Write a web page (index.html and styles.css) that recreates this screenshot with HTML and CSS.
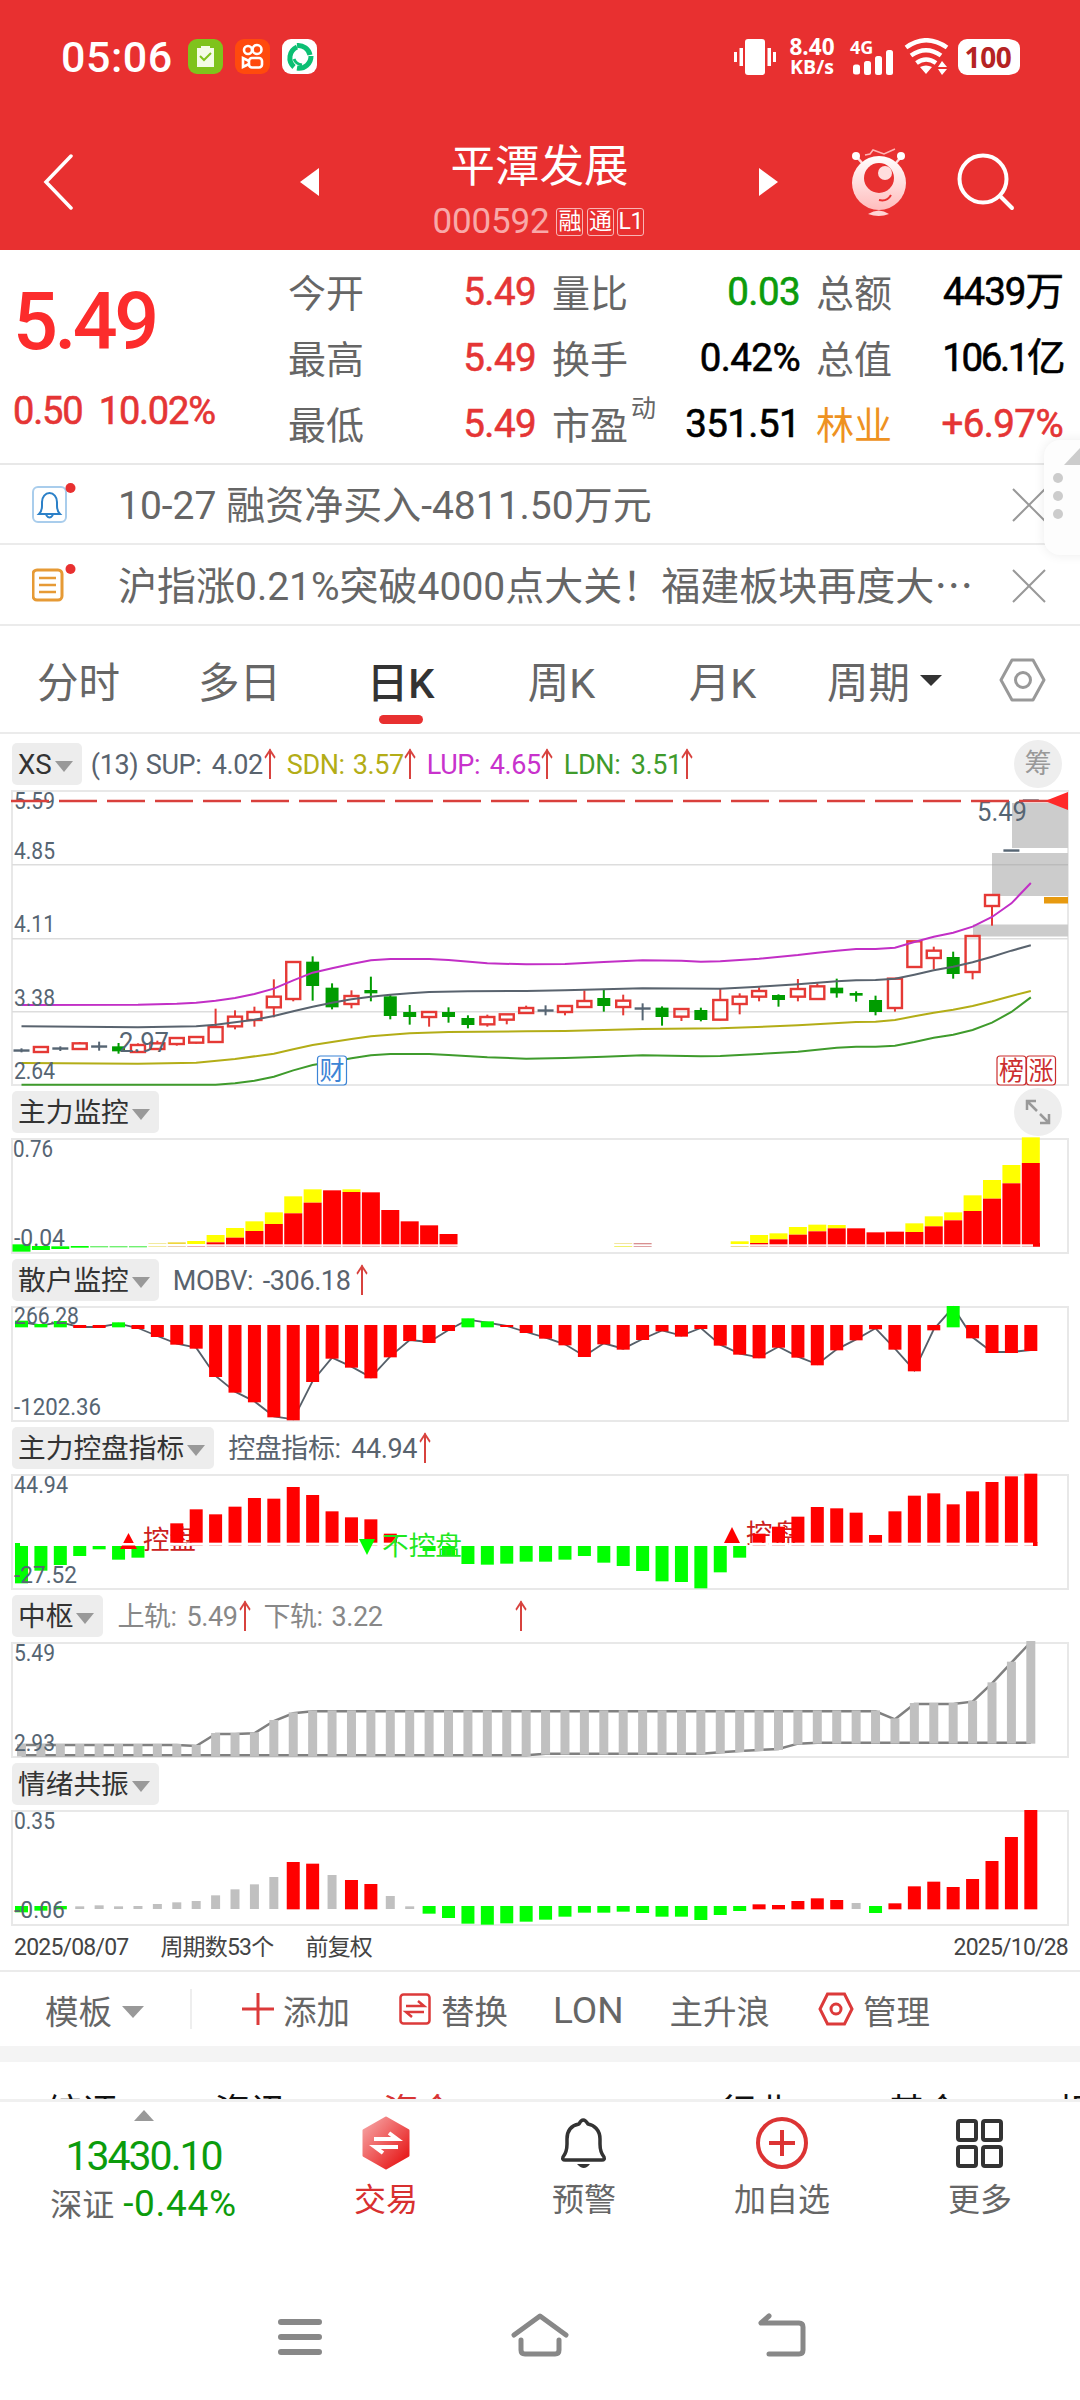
FILE: index.html
```html
<!DOCTYPE html>
<html lang="zh-CN">

<head>
    <meta charset="UTF-8">
    <meta name="viewport" content="width=device-width, initial-scale=1.0">
    <title>平潭发展 000592</title>
    <link rel="stylesheet" href="styles.css">
</head>

<body>
    <header>
        <div class="status">
            <span class="time">05:06</span>
            <svg class="app" width="35" height="35" viewBox="0 0 35 35">
                <rect width="35" height="35" rx="9" fill="#7fc31c" />
                <path d="M9 9h4V7h9v2h4v19H9z" fill="#f4fbe6" />
                <path d="M12 17l4 4 7-7" fill="none" stroke="#7fc31c" stroke-width="2" />
            </svg>
            <svg class="app" width="35" height="35" viewBox="0 0 35 35">
                <rect width="35" height="35" rx="9" fill="#ff4a0d" />
                <g fill="none" stroke="#fff" stroke-width="2.6">
                    <circle cx="13" cy="11" r="4" />
                    <circle cx="22" cy="10.500" r="4.500" />
                    <rect x="14" y="19" width="13" height="9.500" rx="3" />
                    <path d="M14 22l-6-3v9l6-3" />
                </g>
            </svg>
            <svg class="app" width="35" height="35" viewBox="0 0 35 35">
                <rect width="35" height="35" rx="9" fill="#fff" />
                <g fill="none" stroke="#0cbf73" stroke-width="5">
                    <path d="M12 28A12 12 0 0 1 15 8" />
                    <path d="M15 6.500A12 12 0 0 1 28 16" />
                    <path d="M29 17A12 12 0 0 1 15 29" />
                    <path d="M12 20q2 5 8 6" stroke-width="3" />
                </g>
            </svg>
            <svg class="vibrate" width="43" height="36" viewBox="0 0 43 36" fill="#fff">
                <rect x="11" width="20" height="36" rx="3" />
                <rect x="5.500" y="9" width="3.500" height="18" />
                <rect y="13" width="3" height="10" />
                <rect x="33.500" y="9" width="3.500" height="18" />
                <rect x="39" y="13" width="3" height="10" />
            </svg>
            <div class="speed"><b>8.40</b><b class="unit">KB/s</b></div>
            <div class="signal">
                <b>4G</b>
                <svg width="40" height="25" viewBox="0 0 40 25" fill="#fff">
                    <rect y="14.500" width="7" height="10" rx="2.500" />
                    <rect x="11" y="11" width="7" height="14" rx="2.500" />
                    <rect x="22" y="6" width="7" height="19" rx="2.500" />
                    <rect x="33" width="7" height="25" rx="2.500" />
                </svg>
            </div>
            <svg class="wifi" width="45" height="37" viewBox="0 0 45 37">
                <g fill="none" stroke="#fff" stroke-width="4.500">
                    <path d="M2 9.500Q22 -5 43 9.500" />
                    <path d="M7 17.500Q22 7 37 17.500" />
                    <path d="M12.500 25Q22 18 32 25" />
                </g>
                <path d="M16 29q6-3 12 0l-6 7zM34 29l4-6 5 6zM34 31l4 6 5-6z" fill="#fff" />
            </svg>
            <div class="battery">100</div>
        </div>
        <nav>
            <svg class="back" width="30" height="56" viewBox="0 0 30 56">
                <path d="M28 2L3 28l25 26" fill="none" stroke="#fff" stroke-width="3.500" stroke-linecap="round" />
            </svg>
            <svg class="prev" width="19" height="28" viewBox="0 0 19 28"><path d="M19 0v28L0 14z" fill="#fff" /></svg>
            <div class="stock">
                <h1>平潭发展</h1>
                <div class="code">000592<i>融</i><i>通</i><i>L1</i></div>
            </div>
            <svg width="19" height="28" viewBox="0 0 19 28"><path d="M0 0v28l19-14z" fill="#fff" /></svg>
            <svg class="mascot" width="54" height="68" viewBox="0 0 54 68">
                <defs>
                    <linearGradient id="face" x1="0" y1="0" x2="0" y2="1">
                        <stop offset="0" stop-color="#fff" />
                        <stop offset="1" stop-color="#ffbcbc" />
                    </linearGradient>
                </defs>
                <path d="M4 8l7 8M50 8l-7 8" stroke="#ffdcdc" stroke-width="2.500" />
                <circle cx="4" cy="8" r="4" fill="#fff" />
                <circle cx="49" cy="8" r="4" fill="#fff" />
                <path d="M13 7l5-1 3-4 11 4 11-5" fill="none" stroke="#ffb5b5" stroke-width="1.500" />
                <circle cx="27" cy="35" r="27" fill="url(#face)" />
                <circle cx="27" cy="30" r="15" fill="#e83030" />
                <circle cx="33" cy="25" r="7" fill="#ffdede" />
                <path d="M27 52q8 2 12-5" fill="none" stroke="#e83030" stroke-width="2" />
                <path d="M16 66q11-7 21 0-10 4-21 0z" fill="#ffd5d5" />
            </svg>
            <svg class="search" width="58" height="58" viewBox="0 0 58 58" fill="none" stroke="#fff" stroke-width="4">
                <circle cx="26" cy="26" r="23.500" />
                <path d="M43 43l12 12" stroke-linecap="round" />
            </svg>
        </nav>
    </header>

    <section class="quote">
        <div class="price">
            <strong>5.49</strong>
            <span>0.50&nbsp; 10.02%</span>
        </div>
        <div class="grid">
            <p>今开<b class="up">5.49</b></p>
            <p>量比<b class="down">0.03</b></p>
            <p>总额<b class="amount">4439万</b></p>
            <p>最高<b class="up">5.49</b></p>
            <p>换手<b>0.42%</b></p>
            <p>总值<b class="cap">106.1亿</b></p>
            <p>最低<b class="up">5.49</b></p>
            <p>市盈<sup>动</sup><b class="pe">351.51</b></p>
            <p class="sector">林业<b class="up">+6.97%</b></p>
        </div>
    </section>

    <div class="notice">
        <svg width="44" height="44" viewBox="0 0 44 44" fill="none">
            <rect x="1" y="7" width="33" height="35" rx="5" stroke="#a9cdec" stroke-width="2" />
            <path d="M7 34q3-3 3-8v-4a7.500 9 0 0 1 15 0v4q0 5 3 8zM14 35q3.500 5 7 0" stroke="#2b80c8" stroke-width="2" />
            <circle cx="38.500" cy="8" r="5" fill="#e83030" />
        </svg>
        <span>10-27 融资净买入-4811.50万元</span>
        <svg class="close" width="34" height="34" viewBox="0 0 34 34"><path d="M1 1l32 32M33 1L1 33" stroke="#999" stroke-width="2" /></svg>
    </div>
    <div class="notice news">
        <svg width="44" height="44" viewBox="0 0 44 44" fill="none">
            <rect x="1" y="9" width="29" height="30" rx="4" stroke="#e69a35" stroke-width="3" />
            <path d="M7 17h17M7 24h17M7 31h17" stroke="#e69a35" stroke-width="2.500" />
            <circle cx="38.500" cy="8" r="5" fill="#e83030" />
        </svg>
        <span>沪指涨0.21%突破4000点大关！福建板块再度大<i>…</i></span>
        <svg class="close" width="34" height="34" viewBox="0 0 34 34"><path d="M1 1l32 32M33 1L1 33" stroke="#999" stroke-width="2" /></svg>
    </div>
    <div class="drawer"><i></i><i></i><i></i></div>

    <ul class="tabs">
        <li>分时</li>
        <li>多日</li>
        <li class="active">日K</li>
        <li>周K</li>
        <li>月K</li>
        <li class="period">周期<i></i></li>
        <li class="setting">
            <svg width="48" height="44" viewBox="0 0 48 44" fill="none" stroke="#999" stroke-width="3">
                <path d="M13 2h21l11 20-11 20H13L2 22z" stroke-linejoin="round" />
                <circle cx="24" cy="22" r="7.500" />
            </svg>
        </li>
    </ul>

    <div class="head head-main">
        <button>XS<i></i></button>
        <span class="val" style="width: 55px">(13)</span>
        <span class="val" style="width: 66px">SUP:</span><span class="val" style="width: 53px">4.02</span><i class="rise"></i>
        <span class="val sdn" style="width: 66px">SDN:</span><span class="val sdn" style="width: 52px">3.57</span><i class="rise"></i>
        <span class="val lup" style="width: 63px">LUP:</span><span class="val lup" style="width: 52px">4.65</span><i class="rise"></i>
        <span class="val ldn" style="width: 67px">LDN:</span><span class="val ldn" style="width: 51px">3.51</span><i class="rise"></i>
        <div class="round">筹</div>
    </div>
    <svg id="kline" width="1080" height="300" viewBox="0 790 1080 300"></svg>

    <div class="head head-first">
        <button>主力监控<i></i></button>
        <div class="round">
            <svg width="26" height="26" viewBox="0 0 26 26" fill="none" stroke="#999" stroke-width="2.500">
                <path d="M2 11V2h9M2 2l10 10M24 15v9h-9M24 24L15 15" />
            </svg>
        </div>
    </div>
    <svg id="main-force" width="1080" height="120" viewBox="0 1136 1080 120"></svg>

    <div class="head">
        <button>散户监控<i></i></button>
        <span class="val first" style="width: 90px">MOBV:</span><span class="val" style="width: 94px">-306.18</span><i class="rise"></i>
    </div>
    <svg id="retail" width="1080" height="120" viewBox="0 1304 1080 120"></svg>

    <div class="head">
        <button>主力控盘指标<i></i></button>
        <span class="val first" style="width: 123px">控盘指标:</span><span class="val" style="width: 68px">44.94</span><i class="rise"></i>
    </div>
    <svg id="control" width="1080" height="120" viewBox="0 1472 1080 120"></svg>

    <div class="head">
        <button>中枢<i></i></button>
        <span class="val grey first" style="width: 69px">上轨:</span><span class="val grey" style="width: 53px">5.49</span><i class="rise wide"></i>
        <span class="val grey" style="width: 68px">下轨:</span><span class="val grey" style="width: 184px">3.22</span><i class="rise"></i>
    </div>
    <svg id="pivot" width="1080" height="120" viewBox="0 1640 1080 120"></svg>

    <div class="head">
        <button>情绪共振<i></i></button>
    </div>
    <svg id="mood" width="1080" height="120" viewBox="0 1808 1080 120"></svg>

    <div class="dates">
        <span>2025/08/07</span>
        <span class="count">周期数53个</span>
        <span>前复权</span>
        <span class="end">2025/10/28</span>
    </div>

    <div class="tools">
        <span class="template">模板<i></i></span>
        <span class="add">
            <svg width="32" height="32" viewBox="0 0 32 32"><path d="M16 0v32M0 16h32" stroke="#dc3a3a" stroke-width="3" /></svg>添加
        </span>
        <span class="swap">
            <svg width="32" height="32" viewBox="0 0 32 32" fill="none" stroke="#dc3a3a" stroke-width="2.500">
                <rect x="1.500" y="1.500" width="29" height="29" rx="3" />
                <path d="M7 13h18l-6-5M25 19H7l6 5" />
            </svg>替换
        </span>
        <span class="lon">LON</span>
        <span class="wave">主升浪</span>
        <span class="manage">
            <svg width="36" height="34" viewBox="0 0 36 34" fill="none" stroke="#dc3a3a" stroke-width="3">
                <path d="M9.500 2h17L34 17l-7.500 15h-17L2 17z" />
                <circle cx="18" cy="17" r="5" />
            </svg>管理
        </span>
    </div>

    <div class="subtabs">
        <span>综评</span><span>资讯</span><span class="on">资金</span><span class="f10">F10</span><span>行业</span><span>基金</span><span>相关</span>
    </div>

    <footer>
        <div class="index">
            <svg width="20" height="11" viewBox="0 0 20 11"><path d="M10 0l10 11H0z" fill="#999" /></svg>
            <span class="point">13430.10</span>
            <span class="market">深证 <b>-0.44%</b></span>
        </div>
        <div class="item trade">
            <svg width="54" height="54" viewBox="0 0 54 54">
                <defs>
                    <linearGradient id="hex" x1="0" y1="0" x2="1" y2="1">
                        <stop offset=".1" stop-color="#f59a9a" />
                        <stop offset=".85" stop-color="#e82222" />
                    </linearGradient>
                </defs>
                <path d="M27 2l22 12.500v25L27 52 5 39.500v-25z" fill="url(#hex)" stroke="url(#hex)" stroke-width="3" stroke-linejoin="round" />
                <path d="M15 23h23l-8-6M39 31H16l8 6" fill="none" stroke="#fff" stroke-width="4" />
            </svg>
            交易
        </div>
        <div class="item">
            <svg width="54" height="54" viewBox="0 0 54 54">
                <path d="M6 41q4-5 4-13v-5C10 12 17 9 22 8q4-8 9 0c6 1 12 6 12 15v5q0 8 4 13 1 3-2 3H8q-3 0-2-3z" fill="none" stroke="#333" stroke-width="3.500" stroke-linejoin="round" />
                <path d="M20 48h13q-6 8-13 0z" fill="#333" />
            </svg>
            预警
        </div>
        <div class="item">
            <svg width="54" height="54" viewBox="0 0 54 54" fill="none" stroke="#dc3434" stroke-width="4">
                <circle cx="27" cy="27" r="24" />
                <path d="M27 14v26M14 27h26" />
            </svg>
            加自选
        </div>
        <div class="item">
            <svg width="54" height="54" viewBox="0 0 54 54" fill="none" stroke="#333" stroke-width="4">
                <rect x="5" y="5" width="18" height="19" rx="2" />
                <rect x="30" y="5" width="18" height="19" rx="2" />
                <rect x="5" y="31" width="18" height="19" rx="2" />
                <rect x="30" y="31" width="18" height="19" rx="2" />
            </svg>
            更多
        </div>
    </footer>

    <div class="sysnav">
        <svg width="46" height="44" viewBox="0 0 46 44" stroke="#888" stroke-width="6" stroke-linecap="round">
            <path d="M4 9h38M4 24h38M4 39h38" />
        </svg>
        <svg width="60" height="44" viewBox="0 0 60 44" fill="none" stroke="#888" stroke-width="5" stroke-linecap="round" stroke-linejoin="round">
            <path d="M4 22L30 3l26 19M11 27v10q0 4 4 4h30q4 0 4-4V27" />
        </svg>
        <svg width="50" height="44" viewBox="0 0 50 44" fill="none" stroke="#888" stroke-width="5" stroke-linecap="round" stroke-linejoin="round">
            <path d="M12 3L4 10h38q4 0 4 4v23q0 4-4 4H12" />
        </svg>
    </div>

    <script src="script.js"></script>
</body>

</html>
```
FILE: styles.css
```css
* {
    margin: 0;
    padding: 0;
    box-sizing: border-box;
}

body {
    width: 1080px;
    height: 2400px;
    overflow: hidden;
    position: relative;
    background: #fff;
    color: #666;
    font-family: Roboto, "Noto Sans CJK SC", sans-serif;
}

svg {
    display: block;
    flex-shrink: 0;
}

i {
    font-style: normal;
}

header {
    height: 250px;
    background: #e83030;
    color: #fff;
}

.status {
    height: 113px;
    display: flex;
    align-items: center;
    padding-left: 61px;
}

.time {
    width: 127px;
    font-size: 43px;
    font-weight: 500;
    letter-spacing: 0.5px;
}

.app {
    margin-right: 12px;
}

.vibrate {
    margin-left: 405px;
}

.speed {
    width: 50px;
    margin-left: 10px;
    font-family: "Open Sans", sans-serif;
    font-size: 22.5px;
    line-height: 20px;
    text-align: center;
}

.speed b {
    display: block;
}

.speed .unit {
    font-size: 19.5px;
}

.signal {
    width: 44px;
    margin: 0 8px 0 15px;
    font-family: "Open Sans", sans-serif;
    font-size: 18px;
    line-height: 16px;
}

.signal b {
    display: block;
    height: 11px;
    margin-left: -2px;
}

.signal svg {
    margin-left: 1px;
}

.battery {
    width: 60px;
    height: 36px;
    margin-left: 9px;
    border-radius: 9px;
    background: #fff;
    box-shadow: 3px 0 0 -1px #fff;
    color: #b52323;
    font: 700 28px/36px "Open Sans", sans-serif;
    letter-spacing: -0.3px;
    text-align: center;
}

nav {
    height: 137px;
    padding-left: 43px;
    display: flex;
    align-items: center;
}

.prev {
    margin-left: 227px;
}

.stock {
    width: 440px;
    margin-top: 25px;
    padding-left: 1px;
    text-align: center;
}

h1 {
    font-size: 44.5px;
    line-height: 55px;
    font-weight: 400;
}

.code {
    display: flex;
    justify-content: center;
    align-items: center;
    height: 54px;
    padding-right: 2px;
    font-size: 35px;
    letter-spacing: -0.2px;
    color: #f8a9a9;
}

.code i {
    width: 27px;
    height: 28px;
    margin-left: 3.5px;
    border: 1.5px solid #f8b5b5;
    border-radius: 3px;
    font-size: 23px;
    line-height: 25px;
    color: #fff;
    text-align: center;
}

.code i:first-child {
    margin-left: 7px;
}

.mascot {
    margin-left: 74px;
}

.search {
    margin-left: 51px;
}

.quote {
    height: 215px;
    padding-top: 10px;
    display: flex;
    border-bottom: 2px solid #e8e8e8;
}

.price {
    width: 289px;
    padding-left: 13px;
    color: #e53535;
}

.price strong {
    display: block;
    height: 111px;
    font-size: 79px;
    line-height: 125px;
    font-weight: 500;
    letter-spacing: -3.5px;
    color: #fc2c2c;
}

.price span {
    font-size: 38px;
    line-height: 80px;
    letter-spacing: -1.2px;
    -webkit-text-stroke: 0.6px;
}

.grid {
    width: 774px;
    margin-left: -1px;
    display: grid;
    grid-template-columns: 248px 248px 247px;
    column-gap: 16px;
    grid-auto-rows: 66px;
}

.grid p {
    display: flex;
    font-size: 38px;
    line-height: 68px;
    white-space: nowrap;
}

.grid b {
    margin-left: auto;
    font-size: 38.5px;
    line-height: 63px;
    font-weight: 400;
    letter-spacing: -0.6px;
    color: #000;
    -webkit-text-stroke: 0.6px;
}

.grid .amount {
    letter-spacing: -1px;
}

.grid .cap {
    letter-spacing: -2.4px;
}

.grid .up {
    color: #e53535;
}

.grid .down {
    color: #0c9c0c;
}

.grid sup {
    font-size: 25px;
    line-height: 33px;
    margin-left: 3px;
}

.grid .sector {
    color: #ee9222;
}

.notice {
    height: 80px;
    padding: 0 34px 0 32px;
    display: flex;
    align-items: center;
    border-bottom: 2px solid #ebebeb;
    font-size: 39px;
    white-space: nowrap;
}

.notice span {
    margin-left: 42px;
    line-height: 85px;
    height: 80px;
}

.notice i {
    font-family: "Noto Sans CJK SC", sans-serif;
    line-height: 1;
}

.notice svg {
    margin-bottom: 4px;
}

.notice .close {
    margin: 2px 0 0 auto;
}

.news {
    height: 81px;
}

.drawer {
    position: absolute;
    top: 440px;
    left: 1044px;
    width: 56px;
    height: 115px;
    padding: 33px 0 0 9px;
    border-radius: 16px;
    background: #fdfdfd;
    box-shadow: 0 0 12px rgba(0, 0, 0, 0.08);
}

.drawer i {
    display: block;
    width: 10px;
    height: 10px;
    margin-bottom: 8px;
    border-radius: 50%;
    background: #ccc;
}

.drawer::before {
    content: "";
    position: absolute;
    left: 20px;
    top: 8px;
    border-left: 16px solid transparent;
    border-bottom: 17px solid #ccc;
}

.tabs {
    height: 108px;
    margin-left: -2px;
    display: flex;
    list-style: none;
    border-bottom: 2px solid #ebebeb;
    font-size: 41.5px;
    line-height: 115px;
}

.tabs li {
    width: 161px;
    text-align: center;
}

.tabs .active {
    color: #333;
    font-weight: 500;
}

.active::after {
    content: "";
    display: block;
    width: 44px;
    height: 9px;
    margin: -26px auto 0;
    border-radius: 5px;
    background: #e83030;
}

.tabs .period {
    width: 196px;
    padding-left: 24px;
    text-align: left;
}

.period i {
    display: inline-block;
    margin-left: 10px;
    vertical-align: 12px;
    border: 11px solid transparent;
    border-top-color: #333;
    border-bottom: 0;
}

.tabs .setting {
    width: 48px;
    padding-top: 32px;
}

.head {
    height: 48px;
    margin-left: 12px;
    padding-top: 3px;
    display: flex;
    font-size: 27px;
    line-height: 44px;
    color: #59636e;
}

.head-main {
    height: 56px;
    padding-top: 9px;
}

.head-first {
    height: 46px;
    padding-top: 1px;
}

.head button {
    height: 42px;
    padding: 1px 9px 0 6px;
    display: flex;
    align-items: center;
    border: 0;
    border-radius: 5px;
    background: #ededed;
    font-family: inherit;
    font-size: 27.7px;
    line-height: 42px;
    color: #333;
}

.head button i {
    margin: 4px 0 0 3px;
    border: 9.5px solid transparent;
    border-top: 11px solid #999;
    border-bottom: 0;
}

.val {
    letter-spacing: -0.4px;
    white-space: nowrap;
}

.head-main .val:nth-child(2) {
    margin-left: 9px;
}

.val.first {
    margin-left: 14px;
}

.sdn {
    color: #b3ad17;
}

.lup {
    color: #c832cc;
}

.ldn {
    color: #3f9b2c;
}

.grey {
    color: #888;
}

.rise {
    width: 11px;
    height: 28px;
    margin: 8px 11px 0 0;
    background: linear-gradient(#d8423e, #d8423e) center / 2px 100% no-repeat;
}

.rise.wide {
    margin-right: 13px;
}

.rise::before {
    content: "";
    display: block;
    width: 8px;
    height: 8px;
    margin: 1px auto 0;
    border-top: 2px solid #d8423e;
    border-left: 2px solid #d8423e;
    transform: rotate(45deg) skew(12deg, 12deg);
}

.round {
    width: 48px;
    height: 48px;
    margin: -3px 18px 0 auto;
    display: flex;
    align-items: center;
    justify-content: center;
    border-radius: 50%;
    background: #eee;
    font-size: 27px;
    color: #999;
}

.dates {
    height: 42px;
    padding: 0 12px 0 14px;
    display: flex;
    font-size: 23px;
    line-height: 39px;
    letter-spacing: -0.8px;
    color: #444;
}

.count {
    margin: 0 32px;
}

.end {
    margin-left: auto;
}

.tools {
    height: 76px;
    display: flex;
    align-items: center;
    border-top: 2px solid #ebebeb;
    font-size: 33.5px;
}

.tools span {
    display: flex;
    align-items: center;
}

.template {
    width: 147px;
    height: 40px;
    margin-right: 50px;
    margin-left: 45px;
    border-right: 2px solid #eee;
}

.template i {
    margin: 6px 0 0 10px;
    border: 11px solid transparent;
    border-top: 12px solid #999;
    border-bottom: 0;
}

.add svg {
    margin-right: 9px;
}

.swap {
    margin-left: 49px;
}

.swap svg {
    margin-right: 10px;
}

.lon {
    margin-left: 45px;
    padding-top: 3px;
    font-size: 37px;
}

.wave {
    margin-left: 46px;
}

.manage {
    margin-left: 48px;
}

.manage svg {
    margin-right: 9px;
}

.subtabs {
    height: 56px;
    padding-left: 46px;
    display: flex;
    overflow: hidden;
    border-top: 16px solid #f4f4f4;
    border-bottom: 3px solid #f0f0f0;
    font-size: 36px;
    line-height: 102px;
    color: #111;
}

.subtabs span {
    flex: 0 0 168.5px;
}

.subtabs .on {
    color: #d83434;
}

.subtabs .f10 {
    padding-left: 8px;
}

footer {
    height: 170px;
    display: flex;
}

.index {
    width: 287px;
    padding-top: 8px;
    display: flex;
    flex-direction: column;
    align-items: center;
}

.point {
    margin-top: 11px;
    font-size: 41px;
    line-height: 49px;
    letter-spacing: -2px;
    color: #0c9c0c;
}

.market {
    font-size: 32px;
    line-height: 46px;
    white-space: nowrap;
}

.market b {
    margin-left: 1px;
    font-size: 37px;
    font-weight: 400;
    letter-spacing: 0.7px;
    color: #0c9c0c;
}

.item {
    width: 198px;
    padding-top: 14px;
    display: flex;
    flex-direction: column;
    align-items: center;
    font-size: 32px;
    line-height: 60px;
}

.trade {
    color: #d83030;
}

.sysnav {
    padding: 41px 0 0 277px;
    display: flex;
    gap: 187px;
}
```
FILE: script.js
```js
const RED = "#ff0000", GREEN = "#00ff00", GREY = "#c0c0c0", SLATE = "#566573"
const STEP = 19.41

const cx = (i) => 21.5 + i * STEP
const rect = (x, y, w, h, fill) => `<rect x="${x}" y="${y}" width="${w}" height="${h}" fill="${fill}"/>`
const text = (x, y, w, size, fill, str) =>
    `<text x="${x}" y="${y}" textLength="${w}" lengthAdjust="spacingAndGlyphs" font-size="${size}" fill="${fill}">${str}</text>`
const frame = (y, h) => `<rect x="12" y="${y}" width="1056" height="${h}" fill="none" stroke="#e8e8e8" stroke-width="2"/>`
const draw = (id, str) => { document.getElementById(id).innerHTML = str }
// all series are stored in thirds of a pixel from the panel origin
const line = (points, top, color, width) =>
    `<polyline points="${points.map(p => cx(p[0]) + "," + (top + p[1] / 3)).join(" ")}" fill="none" stroke="${color}" stroke-width="${width}"/>`

// K line: type, body top, body bottom, high, low
const candles = [
    ["d", 811, 811, 805, 817], ["r", 801, 816, 799, 818], ["d", 805, 805, 799, 813], ["r", 790, 807, 786, 809],
    ["d", 799, 799, 785, 812], ["g", 799, 814, 789, 821], ["r", 795, 816, 790, 818], ["r", 790, 807, 782, 809],
    ["r", 774, 792, 774, 797], ["r", 771, 788, 768, 791], ["r", 741, 786, 686, 786], ["r", 710, 739, 691, 748],
    ["r", 696, 720, 680, 740], ["r", 650, 682, 598, 712], ["r", 546, 657, 546, 664], ["g", 545, 618, 529, 662],
    ["g", 623, 682, 610, 688], ["r", 648, 672, 631, 685], ["g", 630, 640, 590, 664], ["g", 649, 708, 644, 718],
    ["g", 696, 711, 675, 734], ["r", 696, 711, 696, 740], ["g", 696, 711, 682, 728], ["g", 714, 735, 706, 745],
    ["r", 711, 733, 704, 740], ["r", 703, 719, 703, 733], ["r", 684, 699, 677, 702], ["d", 691, 691, 676, 706],
    ["r", 678, 696, 678, 706], ["r", 663, 681, 631, 684], ["g", 654, 678, 630, 695], ["r", 662, 681, 644, 706],
    ["d", 685, 685, 670, 721], ["g", 683, 711, 679, 737], ["r", 687, 710, 687, 723], ["g", 690, 720, 683, 724],
    ["r", 660, 719, 627, 721], ["r", 650, 672, 640, 703], ["r", 633, 650, 622, 664], ["g", 645, 660, 643, 680],
    ["r", 627, 650, 597, 664], ["r", 619, 657, 610, 657], ["g", 623, 640, 596, 653], ["g", 639, 647, 634, 665],
    ["g", 660, 696, 647, 706], ["r", 596, 684, 594, 695], ["r", 484, 561, 484, 563], ["r", 512, 534, 500, 568],
    ["g", 531, 582, 515, 596], ["r", 468, 576, 468, 598], ["r", 345, 378, 345, 437], ["d", 211, 211, 211, 211],
    ["d", 61, 61, 61, 61]
]
const lup = [[0, 675], [6, 674], [8, 671], [9, 668], [10, 662], [11, 654], [12, 642], [13, 626], [14, 601], [15, 578], [16, 565], [17, 552], [18, 541], [19, 537], [21, 537], [22, 540], [24, 550], [26, 553], [28, 552], [30, 546], [32, 541], [34, 542], [35, 545], [36, 544], [38, 536], [40, 525], [41, 518], [42, 512], [43, 507], [44, 507], [45, 503], [46, 486], [47, 470], [48, 458], [49, 440], [50, 411], [51, 370], [52, 309]]
const sup = [[0, 739], [6, 742], [9, 739], [10, 734], [11, 727], [12, 719], [13, 708], [14, 694], [15, 680], [16, 668], [17, 658], [18, 650], [19, 644], [20, 640], [21, 636], [23, 634], [26, 633], [28, 631], [32, 625], [36, 626], [38, 620], [40, 613], [42, 604], [43, 601], [44, 600], [45, 596], [46, 584], [47, 571], [48, 560], [49, 547], [50, 530], [51, 512], [52, 496]]
const sdn = [[0, 849], [6, 851], [9, 848], [11, 837], [13, 821], [14, 808], [15, 795], [16, 786], [17, 777], [18, 769], [20, 760], [22, 756], [26, 754], [28, 753], [32, 747], [36, 745], [40, 736], [43, 726], [44, 725], [45, 720], [46, 709], [47, 698], [48, 689], [49, 678], [50, 664], [51, 648], [52, 633]]
const ldn = [[0, 914], [10, 914], [11, 910], [12, 902], [13, 890], [14, 871], [15, 855], [16, 845], [17, 835], [18, 826], [19, 822], [21, 822], [22, 825], [24, 832], [26, 836], [28, 834], [30, 830], [32, 826], [35, 829], [36, 828], [38, 822], [40, 815], [42, 803], [43, 800], [44, 800], [45, 797], [46, 786], [47, 773], [48, 764], [49, 750], [50, 728], [51, 696], [52, 652]]

const drawKline = () => {
    const top = 780
    let str = frame(791, 294)
    for (const y of [864, 938, 1011]) str += rect(12, y, 1056, 1.5, "#ddd")
    str += rect(1012, 803, 56, 45, "#ccc") + rect(992, 853, 76, 43, "#ccc") + rect(973, 924.5, 95, 12, "#ccc")
    str += rect(992, 864, 76, 1.5, "#bbb") + rect(1044, 897, 24, 6.5, "#e79a10")
    const labels = [["5.59", 809], ["4.85", 858.7], ["4.11", 932], ["3.38", 1005.5], ["2.64", 1079]]
    candles.forEach(([type, a, b, high, low], i) => {
        const x = cx(i), y = top + a / 3, h = (b - a) / 3
        const color = { r: "#e53935", g: "#009c00", d: SLATE }[type]
        if (type == "r") {
            str += rect(x - 1, top + high / 3, 2, (a - high) / 3, color) + rect(x - 1, top + b / 3, 2, (low - b) / 3, color)
            str += `<rect x="${x - 7}" y="${y}" width="14" height="${h}" fill="none" stroke="${color}" stroke-width="2.4"/>`
        } else {
            str += rect(x - 1, top + high / 3, 2, (low - high) / 3, color)
            str += type == "g" ? rect(x - 6.5, y, 13, h, color) : rect(x - 8, y - 1, 16, 2.4, color)
        }
    })
    str += line(lup, top, "#c22fc6", 2) + line(sup, top, "#59636e", 2) + line(sdn, top, "#b3ad17", 2) + line(ldn, top, "#3f9b2c", 2)
    for (const [s, y] of labels) str += text(14, y, 41, 23, SLATE, s)
    str += text(119, 1052, 50, 27, SLATE, "2.97") + text(977, 821, 50, 27, SLATE, "5.49")
    str += `<path d="M11 801H1050" stroke="#d9403c" stroke-width="2.5" stroke-dasharray="38 10"/>`
    str += `<path d="M1045 801l23-9v18z" fill="#ff2a2a"/>`
    for (const [x, s, c] of [[317.5, "财", "#3c84d6"], [997, "榜", "#cc2f2f"], [1026.5, "涨", "#cc2f2f"]]) {
        str += `<rect x="${x}" y="1056" width="29" height="29" rx="3" fill="#fff" stroke="${c}" stroke-width="1.2"/>`
        str += text(x + 2, 1080, 25, 26, c, s)
    }
    draw("kline", str)
}

// index, yellow top, red top
const force = [[10, 435, 457], [11, 414, 443], [12, 394, 423], [13, 367, 402], [14, 319, 370], [15, 298, 338], [16, 301, 301], [17, 298, 306], [18, 307, 307], [19, 360, 360], [20, 394, 394], [21, 406, 406], [22, 432, 432], [38, 435, 459], [39, 430, 448], [40, 411, 434], [41, 404, 424], [42, 405, 415], [43, 415, 415], [44, 427, 427], [45, 425, 425], [46, 400, 426], [47, 379, 409], [48, 367, 391], [49, 316, 363], [50, 270, 326], [51, 225, 280], [52, 142, 219]]
const drawForce = () => {
    const top = 1090
    const bar = (i, a, b, c) => rect(cx(i) - 9, top + a / 3, 18, (b - a) / 3, c)
    let str = frame(1139, 114)
    for (const [i, y, r] of force) {
        str += bar(i, y, r, "#ffff00") + bar(i, r, 463, RED) + bar(i, 467.5, 470, "#e89a9a")
    }
    str += rect(1033, top + 153, 7, 3.7, RED)
    str += bar(0, 463, 485, GREEN) + bar(1, 468, 480, GREEN) + bar(2, 469, 477, GREEN) + bar(3, 468, 473, GREEN)
    for (const i of [4, 5, 6]) str += bar(i, 468.5, 472, "#55ee55")
    str += bar(7, 459, 461.5, "#f0e68c") + bar(7, 468, 470.5, "#f0e68c")
    str += bar(8, 457, 462, "#efd53c") + bar(8, 468, 470.5, "#e8c49a")
    str += bar(9, 453, 462, "#ffff00") + bar(9, 468, 470.5, "#e89a9a")
    str += bar(31, 459, 461.5, "#f0e08c") + bar(31, 468, 471, "#f0f06c")
    str += bar(32, 459, 463, "#d99090") + bar(32, 468, 470.5, "#d99090")
    str += bar(37, 454, 462, "#ffff00") + bar(37, 468, 470.5, "#e8d07a")
    str += text(13, 1156.5, 40, 23, SLATE, "0.76") + text(14, 1246, 51, 23, SLATE, "-0.04")
    draw("main-force", str)
}

const mobv = [692, 702, 693, 714, 714, 697, 717, 741, 764, 776, 861, 908, 937, 982, 991, 876, 806, 833, 865, 802, 753, 759, 723, 685, 694, 711, 729, 746, 766, 801, 763, 779, 750, 724, 740, 717, 767, 794, 805, 773, 803, 826, 781, 751, 718, 779, 844, 721, 648, 745, 789, 789, 783]
const drawRetail = () => {
    const top = 1090
    let str = frame(1307, 114) + line(mobv.map((v, i) => [i, v < 705 ? v + 4 : v - 3]), top, "#555f69", 1.8)
    mobv.forEach((v, i) => {
        str += v < 705 ? rect(cx(i) - 6.5, top + v / 3, 13, (712 - v) / 3, GREEN)
            : rect(cx(i) - 6.5, top + 235, 13, (v - 705) / 3, RED)
    })
    str += text(14, 1324, 65, 23, SLATE, "266.28") + text(14, 1415, 87, 23, SLATE, "-1202.36")
    draw("retail", str)
}

const control = [460, 422, 405, 378, 358, 389, 383, 0, 280, 238, 253, 230, 204, 206, 171, 195, 244, 262, 268, 311, 0, 363, 378, 402, 404, 401, 395, 395, 389, 378, 398, 408, 423, 454, 456, 475, 427, 383, 311, 290, 260, 231, 235, 248, 315, 244, 197, 190, 223, 184, 156, 139, 131]
const drawControl = () => {
    const top = 1430
    let str = frame(1475, 114)
    str += text(143, 1549, 53, 26, "#cc2020", "控盘") + text(746, 1543, 53, 26, "#cc2020", "控盘")
    control.forEach((v, i) => {
        if (!v) return
        if (v < 338) {
            // strip under the zero line hides the lower edge of the signal text
            str += rect(cx(i) - 9.7, top + 113, 19.5, 3, "#fff")
            str += rect(cx(i) - 6.5, top + v / 3, 13, (338 - v) / 3, RED) + rect(cx(i) - 6.5, top + 115, 13, 0.7, "#f3b0b0")
        } else {
            str += rect(cx(i) - 6.5, top + 116, 13, (v - 348) / 3, GREEN)
        }
    })
    str += rect(15, 1543, 5, 5, GREEN) + rect(1033, 1542, 4.5, 4, RED)
    str += `<path d="M120 1549l8.500-16 8.500 16zM724 1543l8-16 8 16z" fill="#f00"/><path d="M359 1539h16l-8 16z" fill="#0f0"/>`
    str += rect(120, 1543, 17, 2.5, "#fff")
    str += text(382, 1555, 80, 26, "#1fe81f", "不控盘")
    str += text(14, 1492.7, 54, 23, SLATE, "44.94") + text(14, 1582.7, 63, 23, SLATE, "-27.52")
    draw("control", str)
}

const upper = [945, 945, 945, 945, 945, 945, 945, 945, 945, 948, 912, 912, 910, 873, 850]
for (let i = 15; i < 45; i++) upper.push(844)
upper.push(868, 822, 822, 822, 815, 760, 698, 636)
const lower = []
for (let i = 0; i < 53; i++) lower.push(i < 27 ? 976 : i < 36 ? 971 : i < 37 ? 967 : i < 38 ? 963 : i < 39 ? 960 : i < 40 ? 957 : i < 41 ? 941 : 938)
const drawPivot = () => {
    const top = 1430
    let str = frame(1643, 114)
    str += line(upper.map((v, i) => [i, v]), top, "#808080", 2.5) + line(lower.map((v, i) => [i, v]), top, "#808080", 2.5)
    upper.forEach((v, i) => { str += rect(cx(i) - 4.5, top + v / 3 - 1, 9, (lower[i] - v) / 3 + 2, GREY) })
    str += text(14, 1660.5, 41, 23, SLATE, "5.49") + text(14, 1750.5, 41, 23, SLATE, "2.93")
    draw("pivot", str)
}

const mood = [457, 452, 448, 439, 436, 439, 438, 432, 427, 423, 406, 388, 373, 351, 306, 311, 345, 360, 372, 408, 439, 461, 474, 491, 494, 490, 485, 479, 470, 458, 458, 455, 459, 470, 470, 480, 465, 453, 433, 435, 423, 415, 420, 429, 459, 430, 379, 365, 381, 357, 303, 231, 150]
const weak = [3, 4, 5, 6, 7, 8, 9, 10, 11, 12, 13, 16, 19, 20, 43]
const drawMood = () => {
    const top = 1760
    let str = frame(1811, 114)
    mood.forEach((v, i) => {
        if (weak.includes(i)) str += rect(cx(i) - 4.5, top + v / 3, 9, (447 - v) / 3, GREY)
        else if (v > 440) str += rect(cx(i) - 6.5, top + 146, 13, (v - 438) / 3, GREEN)
        else str += rect(cx(i) - 6.5, top + v / 3, 13, (448 - v) / 3, RED)
    })
    str += text(14, 1829, 41, 23, SLATE, "0.35") + text(14, 1917.5, 51, 23, SLATE, "-0.06")
    draw("mood", str)
}

drawKline()
drawForce()
drawRetail()
drawControl()
drawPivot()
drawMood()
```
